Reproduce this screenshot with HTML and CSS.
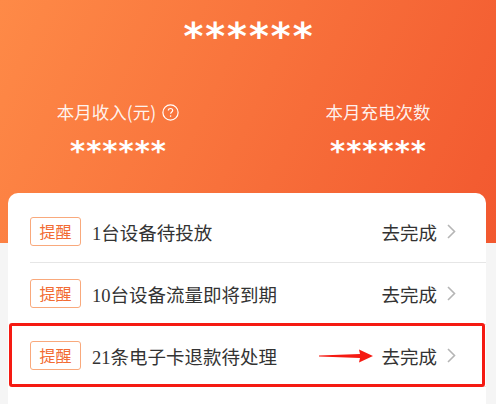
FILE: index.html
```html
<!DOCTYPE html>
<html lang="zh-CN">
<head>
  <meta charset="UTF-8">
  <meta name="viewport" content="width=device-width, initial-scale=1.0">
  <title>收益概览</title>
  <link rel="stylesheet" href="styles.css">
</head>
<body>
  <div id="income-page">
    <!-- Header Section -->
    <div class="header">
      <div class="total">******</div>
      <div class="stats">
        <div class="stat">
          <div class="stat-label">本月收入(元)
            <svg class="help" width="17" height="17" viewBox="0 0 17 17">
              <circle cx="8.5" cy="8.5" r="7.6" fill="none" stroke="#fff" stroke-width="1.2"/>
              <path d="M6.3 6.6 C6.3 5.2 7.3 4.5 8.5 4.5 C9.8 4.5 10.7 5.3 10.7 6.4 C10.7 7.9 8.6 8 8.6 9.8" fill="none" stroke="#fff" stroke-width="1.2"/>
              <circle cx="8.6" cy="12.1" r="0.8" fill="#fff"/>
            </svg>
          </div>
          <div class="stat-value">******</div>
        </div>
        <div class="stat">
          <div class="stat-label">本月充电次数</div>
          <div class="stat-value">******</div>
        </div>
      </div>
    </div>

    <!-- Reminder List -->
    <div class="card">
      <div class="reminder-item">
        <span class="tag">提醒</span>
        <span class="title">1台设备待投放</span>
        <span class="action">去完成</span>
        <svg class="chevron" width="9" height="15" viewBox="0 0 9 15">
          <path d="M1 1 L7.5 7.5 L1 14" fill="none" stroke="#b5b5b5" stroke-width="1.6"/>
        </svg>
      </div>
      <div class="reminder-item">
        <span class="tag">提醒</span>
        <span class="title">10台设备流量即将到期</span>
        <span class="action">去完成</span>
        <svg class="chevron" width="9" height="15" viewBox="0 0 9 15">
          <path d="M1 1 L7.5 7.5 L1 14" fill="none" stroke="#b5b5b5" stroke-width="1.6"/>
        </svg>
      </div>
      <div class="reminder-item highlighted">
        <span class="tag">提醒</span>
        <span class="title">21条电子卡退款待处理</span>
        <svg class="arrow" width="54" height="14" viewBox="0 0 54 14">
          <path d="M0 6.4 L41 5 L40 0.5 L54 7 L40 13.5 L41 9 L0 7.6 Z" fill="#f51a12"/>
        </svg>
        <span class="action">去完成</span>
        <svg class="chevron" width="9" height="15" viewBox="0 0 9 15">
          <path d="M1 1 L7.5 7.5 L1 14" fill="none" stroke="#b5b5b5" stroke-width="1.6"/>
        </svg>
        <div class="mark"></div>
      </div>
      <div class="reminder-item empty"></div>
    </div>
  </div>
</body>
</html>
```

FILE: styles.css
```css
/* General Styles */
body {
  margin: 0;
  font-family: 'Noto Sans CJK SC', sans-serif;
  background: #f5f5f5;
  color: #333;
}

#income-page {
  position: relative;
}

#income-page .header {
  height: 243px;
  background: linear-gradient(115deg, #fe8a47, #f2582f);
  color: #fff;
  text-align: center;
  box-sizing: border-box;
  padding-top: 14px;
}

#income-page .total {
  font-family: 'DejaVu Sans', sans-serif;
  font-size: 38px;
  font-weight: bold;
  line-height: 44px;
  letter-spacing: 2px;
  padding-left: 2px;
}

#income-page .stats {
  display: flex;
  justify-content: center;
  gap: 60px;
  margin-top: 42px;
}

#income-page .stat {
  width: 200px;
}

#income-page .stat-label {
  display: flex;
  justify-content: center;
  align-items: center;
  gap: 6px;
  font-size: 17.5px;
  line-height: 24px;
  color: rgba(255, 255, 255, 0.92);
}

#income-page .stat-value {
  font-family: 'DejaVu Sans', sans-serif;
  font-size: 29px;
  font-weight: bold;
  line-height: 34px;
  letter-spacing: 1px;
  padding-left: 1px;
  margin-top: 10px;
}

#income-page .card {
  margin: -50px 10px 0 8px;
  padding-top: 8px;
  background: #fff;
  border-radius: 10px 10px 0 0;
  position: relative;
}

#income-page .reminder-item {
  display: flex;
  align-items: center;
  height: 61px;
  margin-left: 22px;
  padding-right: 30px;
  border-bottom: 1px solid #e6e6e6;
  position: relative;
}

#income-page .reminder-item.empty {
  height: 30px;
  border-bottom: none;
}

#income-page .tag {
  box-sizing: border-box;
  width: 51px;
  height: 29px;
  line-height: 27px;
  text-align: center;
  font-size: 16px;
  color: #f26b33;
  border: 1px solid #f9a97c;
  border-radius: 3px;
}

#income-page .title {
  margin-left: 11px;
  font-family: 'Liberation Serif', 'Noto Sans CJK SC', serif;
  font-size: 18.5px;
  color: #333;
  flex: 1;
}

#income-page .action {
  font-size: 18.5px;
  color: #333;
}

#income-page .chevron {
  margin-left: 10px;
}

#income-page .arrow {
  margin-right: 8px;
}

#income-page .highlighted .mark {
  position: absolute;
  left: -21px;
  right: 1px;
  top: -2px;
  bottom: -1px;
  border: 3px solid #f51a12;
  border-radius: 3px;
}
```
